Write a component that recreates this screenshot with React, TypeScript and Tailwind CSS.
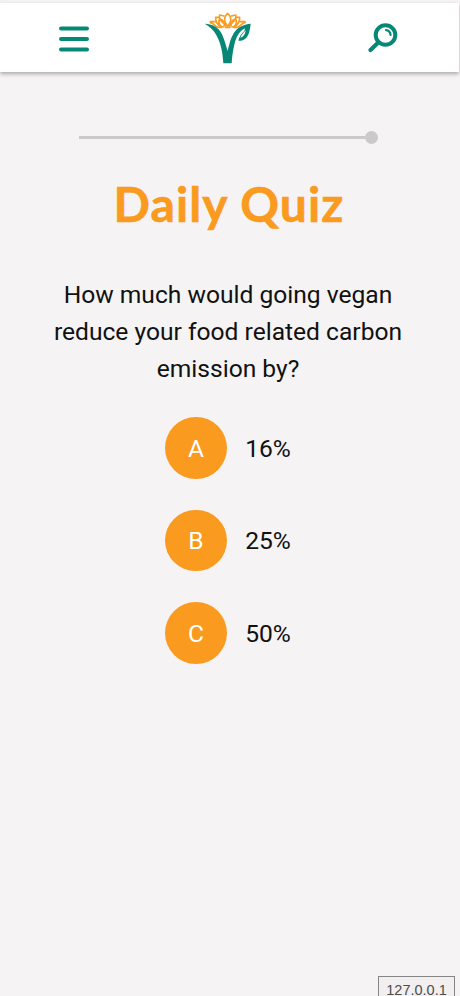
import React from 'react';

interface Answer {
  letter: string;
  label: string;
}

const answers: Answer[] = [
  { letter: 'A', label: '16%' },
  { letter: 'B', label: '25%' },
  { letter: 'C', label: '50%' },
];

const MenuIcon: React.FC = () => (
  <svg width="30" height="26" viewBox="0 0 30 26" fill="none" stroke="#078877" strokeWidth="4" strokeLinecap="round">
    <path d="M2 2.5H28M2 13H28M2 23.5H28" />
  </svg>
);

const SearchIcon: React.FC = () => (
  <svg width="30" height="30" viewBox="0 0 30 30" fill="none" stroke="#078877" strokeLinecap="round">
    <circle cx="17.5" cy="12" r="9.8" strokeWidth="4" />
    <path d="M10.3 19.5L2.5 27" strokeWidth="4.2" />
    <path d="M18 7.2C20.6 7.5 22.2 9.2 22.6 11.8" strokeWidth="2.2" />
  </svg>
);

const Logo: React.FC = () => (
  <svg width="48" height="54" viewBox="44 33 144 162" fill="none">
    <g stroke="#f99c20" strokeWidth="5" strokeLinejoin="round" strokeLinecap="round">
      <path d="M115 40C106 48 104 56 107 66L115 80L123 66C126 56 124 48 115 40Z" />
      <path d="M104 48L91 45C89 53 92 61 99 66L110 78" />
      <path d="M126 48L139 45C141 53 138 61 131 66L120 78" />
      <path d="M88 52L79 52C78 62 84 76 96 81C104 82 108 75 105 68C102 62 97 58 91 57C87 64 89 73 96 80" />
      <path d="M142 52L151 52C152 62 146 76 134 81C126 82 122 75 125 68C128 62 133 58 139 57C143 64 141 73 134 80" />
      <path d="M78 65H63V68C73 68 76 81 87 82H97M152 65H167V68C157 68 154 81 143 82H133M108 82H122" />
    </g>
    <path d="M46 71C68 71 89 82 98 103C105 119 110 137 115 153C120 132 125 109 138 93C149 79 165 73 184 71C182 92 178 108 168 116C162 121 155 122 147 122C150 109 157 100 165 93L167 85C149 94 141 111 135 134C130 154 128 173 127 190H102C100 160 96 133 82 107C73 90 61 79 46 71Z" fill="#078877" />
    <path d="M153 114C156 105 162 99 169 91C168 100 164 110 153 114Z" fill="#fff" />
  </svg>
);

const Header: React.FC = () => (
  <header className="mt-[3px] mr-[1px] h-[69px] bg-white shadow-[0_2px_4px_rgba(0,0,0,0.3)] grid grid-cols-3 items-center justify-items-center">
    <button aria-label="Menu" className="mr-[5px] mt-[2px]">
      <MenuIcon />
    </button>
    <div className="mr-[4px] mt-[1px]">
      <Logo />
    </div>
    <button aria-label="Search">
      <SearchIcon />
    </button>
  </header>
);

export default function App() {
  return (
    <div className="relative h-[996px] w-[460px] overflow-hidden bg-[#f5f3f4] font-['Roboto',sans-serif] text-[#111]">
      <Header />

      <main className="flex flex-col items-center pr-1">
        {/* Progress */}
        <div className="mt-[59px] ml-[1px] flex w-[299px] items-center">
          <div className="h-[2.5px] flex-1 bg-[#cacaca]" />
          <div className="size-[13px] rounded-full bg-[#cacaca]" />
        </div>

        <h1 className="mt-[23px] ml-[2px] font-['Lato',sans-serif] text-[48px] leading-[74px] font-bold tracking-[1.1px] text-[#fa9a1e] [-webkit-text-stroke:0.6px_#fa9a1e]">
          Daily Quiz
        </h1>

        <p className="mt-[35px] w-[370px] text-center text-[24.6px] leading-[37px]">
          How much would going vegan reduce your food related carbon emission by?
        </p>

        <div className="mt-[30.4px] flex flex-col gap-[30.8px]">
          {answers.map((answer) => (
            <button key={answer.letter} className="flex items-center gap-[18.5px] text-[24.6px]">
              <span className="flex size-[61.6px] items-center justify-center rounded-full bg-[#fa9a1e] pt-[2px] text-white">
                {answer.letter}
              </span>
              <span className="pt-[2px]">{answer.label}</span>
            </button>
          ))}
        </div>
      </main>

      {/* Host label */}
      <div className="absolute top-[976px] left-[378px] h-[20px] w-[77px] border border-b-0 border-[#858585] bg-[#f1efef] pt-[4px] text-center font-['Liberation_Sans',sans-serif] text-[14.5px] leading-[18px] text-[#4d4d4d]">
        127.0.0.1
      </div>
    </div>
  );
}
